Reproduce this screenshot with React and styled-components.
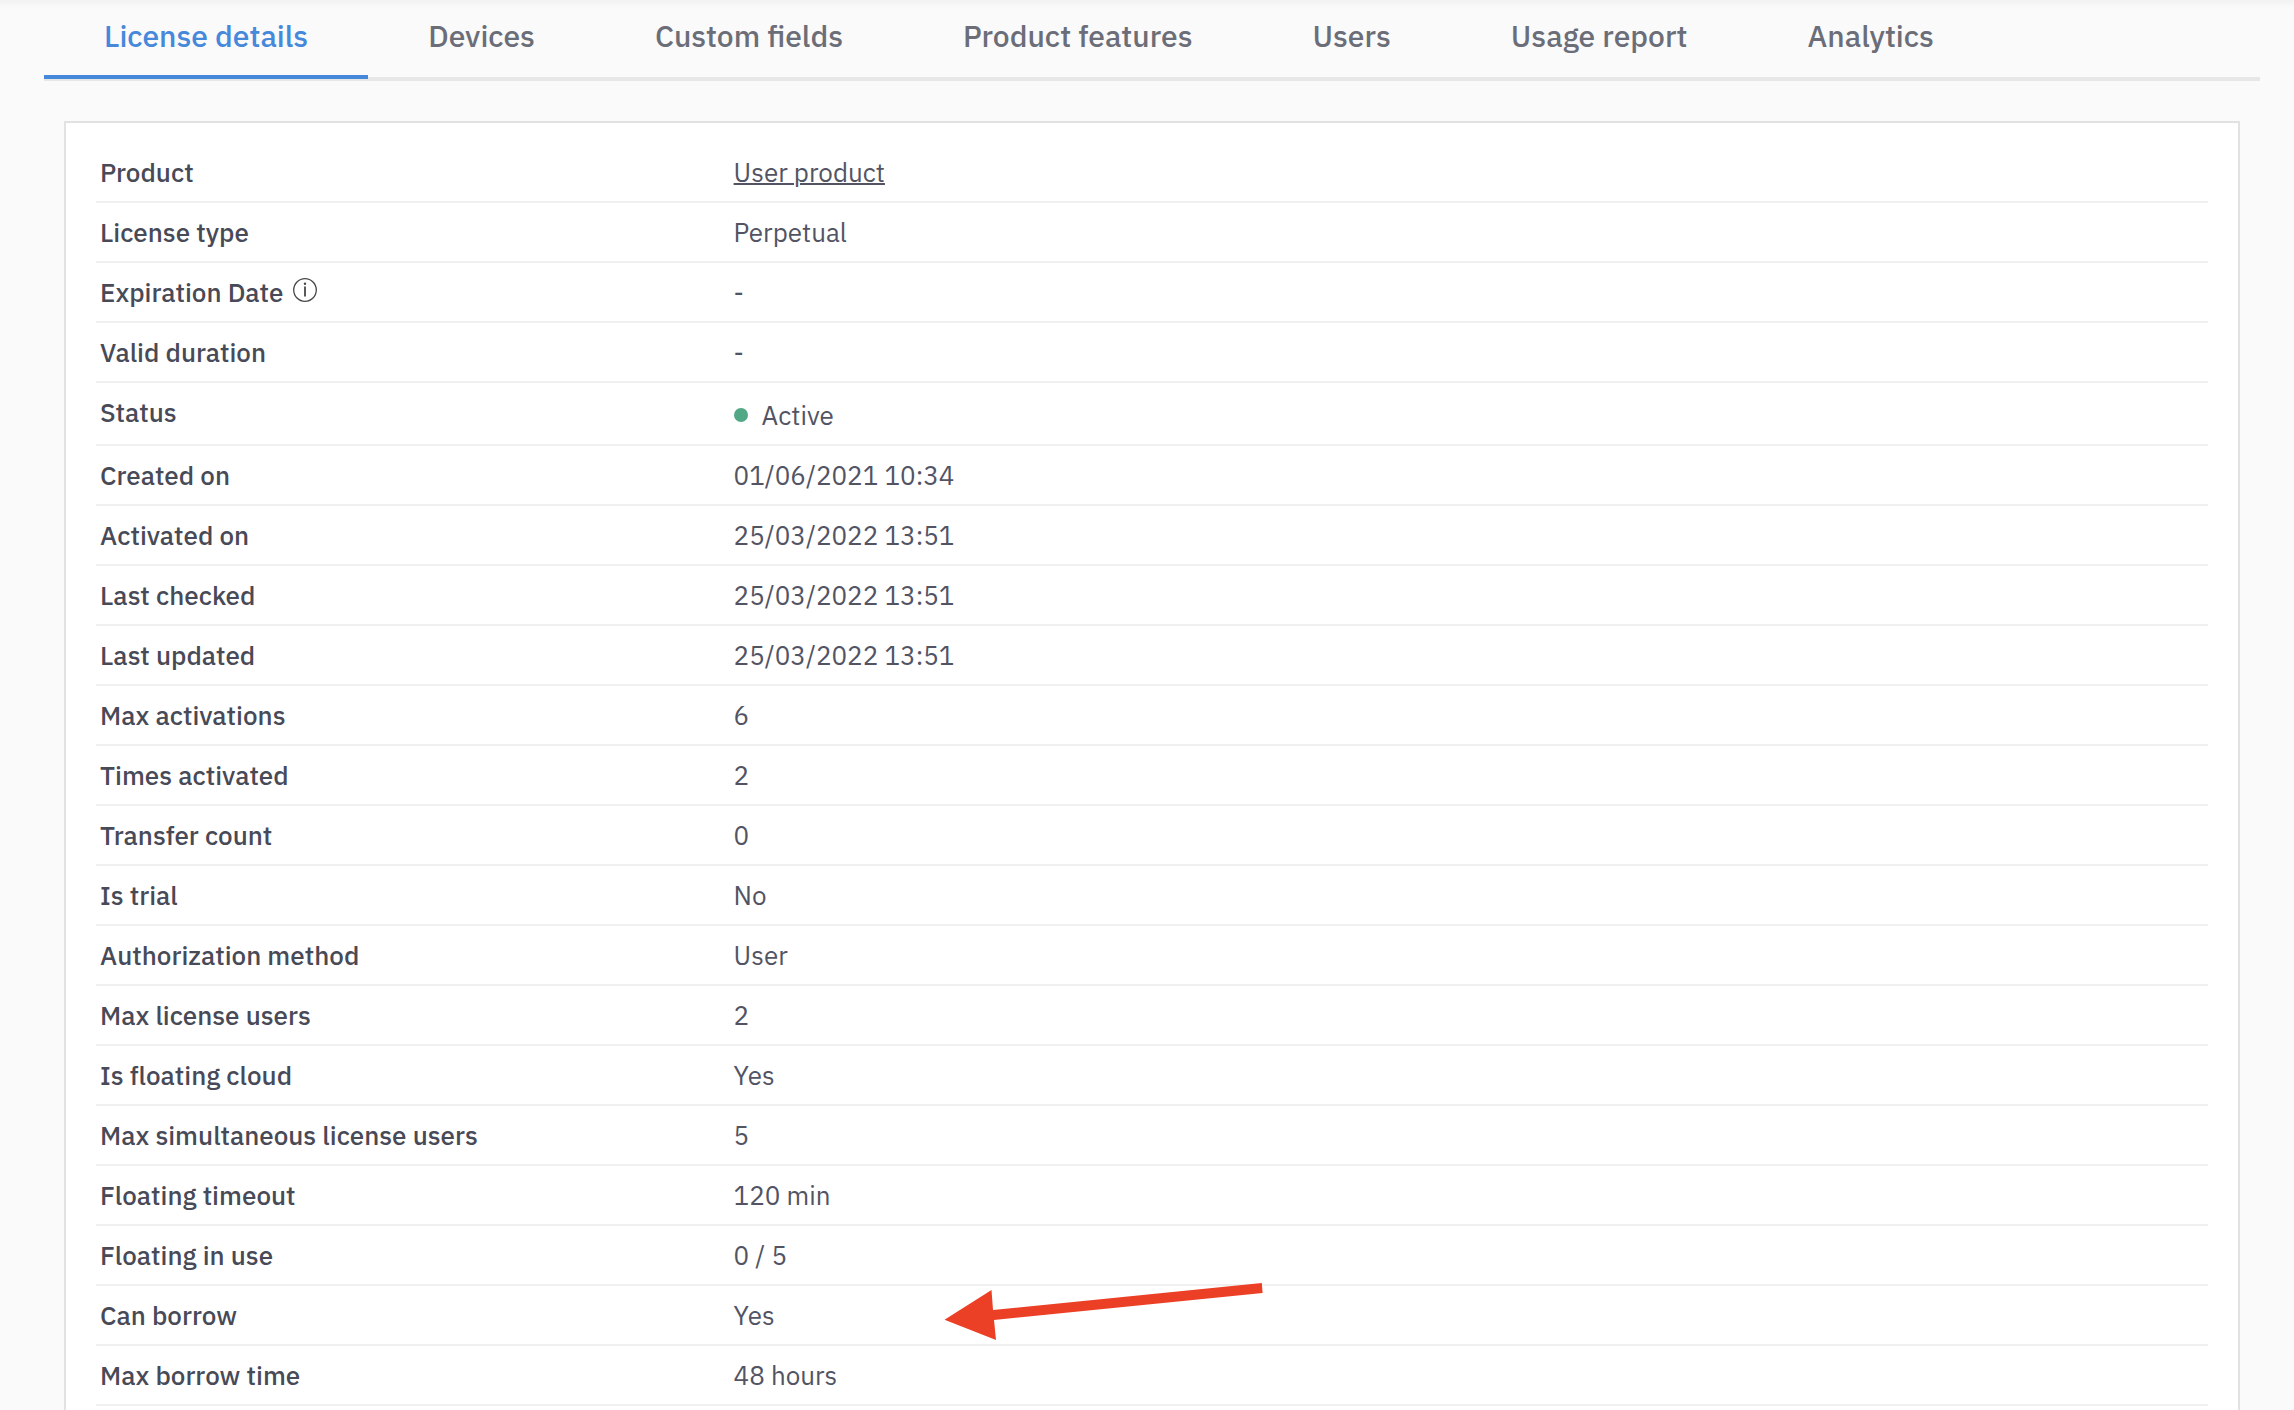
import React, { useState } from "react";
import styled, { createGlobalStyle } from "styled-components";

const GlobalStyle = createGlobalStyle`
  *, *::before, *::after {
    box-sizing: border-box;
  }

  body {
    margin: 0;
    background: #fafafa;
    font-family: "IBM Plex Sans", Roboto, "Liberation Sans", sans-serif;
    color: #525464;
  }
`;

const Page = styled.main`
  display: flex;
  flex-direction: column;
  min-height: 100vh;
  padding: 0 34px 0 44px;
  background: linear-gradient(#f2f2f2, #fafafa 8px);
`;

const TabBar = styled.div`
  display: flex;
  border-bottom: 4px solid #e7e7e7;
`;

const Tab = styled.button`
  height: 79px;
  margin: 0 0 -2px;
  padding: 0 60px 3px;
  border: 0;
  border-bottom: 4px solid
    ${({ $active }) => ($active ? "#4688da" : "transparent")};
  background: none;
  color: ${({ $active }) => ($active ? "#4688da" : "#6b6e78")};
  font-family: inherit;
  font-size: 30px;
  font-weight: 500;
  line-height: 40px;
  white-space: nowrap;
  cursor: pointer;
`;

const Card = styled.section`
  flex: 1;
  margin: 40px 20px 0;
  padding: 20px 30px 0;
  border: 2px solid #e2e2e2;
  border-bottom: 0;
  background: #fff;
`;

const Table = styled.table`
  width: 100%;
  border-spacing: 0;
  table-layout: fixed;
  font-size: 26px;
  line-height: 36px;
`;

const Label = styled.th`
  width: 30%;
  height: 60px;
  padding: 11px 4px;
  border-bottom: 2px solid #f0f0f0;
  color: #484a57;
  font-weight: 500;
  text-align: left;
  vertical-align: top;
`;

const Value = styled.td`
  position: relative;
  padding: 11px 4px;
  border-bottom: 2px solid #f0f0f0;
  vertical-align: top;
`;

const ProductLink = styled.a`
  color: inherit;
  text-decoration: underline;
  text-decoration-thickness: 2px;
`;

const Status = styled.span`
  display: flex;
  align-items: center;
  gap: 14px;
  padding-top: 3px;

  &::before {
    content: "";
    width: 14px;
    height: 14px;
    border-radius: 50%;
    background: #50a886;
  }
`;

const InfoSvg = styled.svg`
  width: 24px;
  height: 24px;
  margin-left: 10px;
`;

const ArrowSvg = styled.svg`
  position: absolute;
  top: -3px;
  left: 214px;
  width: 320px;
  height: 58px;
`;

const InfoIcon = () => (
  <InfoSvg viewBox="0 0 24 24" role="img" aria-label="Info">
    <circle cx="12" cy="12" r="11.3" fill="none" stroke="#484848" strokeWidth="1.3" />
    <circle cx="12" cy="5.7" r="1.2" fill="#484848" />
    <path d="M12 8.5V18.5" stroke="#484848" strokeWidth="1.8" />
  </InfoSvg>
);

const Arrow = () => (
  <ArrowSvg viewBox="0 0 320 58" aria-hidden="true">
    <path
      d="M0.5 36.7L47.5 7L49 27L317.8 0L318.6 10L50 37L52 57Z"
      fill="#eb4026"
    />
  </ArrowSvg>
);

const tabs = [
  "License details",
  "Devices",
  "Custom fields",
  "Product features",
  "Users",
  "Usage report",
  "Analytics",
];

const rows = [
  { label: "Product", value: <ProductLink href="#product">User product</ProductLink> },
  { label: "License type", value: "Perpetual" },
  { label: "Expiration Date", value: "-", info: true },
  { label: "Valid duration", value: "-" },
  { label: "Status", value: <Status>Active</Status> },
  { label: "Created on", value: "01/06/2021 10:34" },
  { label: "Activated on", value: "25/03/2022 13:51" },
  { label: "Last checked", value: "25/03/2022 13:51" },
  { label: "Last updated", value: "25/03/2022 13:51" },
  { label: "Max activations", value: "6" },
  { label: "Times activated", value: "2" },
  { label: "Transfer count", value: "0" },
  { label: "Is trial", value: "No" },
  { label: "Authorization method", value: "User" },
  { label: "Max license users", value: "2" },
  { label: "Is floating cloud", value: "Yes" },
  { label: "Max simultaneous license users", value: "5" },
  { label: "Floating timeout", value: "120 min" },
  { label: "Floating in use", value: "0 / 5" },
  { label: "Can borrow", value: "Yes", arrow: true },
  { label: "Max borrow time", value: "48 hours" },
];

function App() {
  const [active, setActive] = useState(tabs[0]);
  return (
    <>
      <GlobalStyle />
      <Page>
        <TabBar role="tablist">
          {tabs.map((tab) => (
            <Tab
              key={tab}
              type="button"
              role="tab"
              aria-selected={tab === active}
              $active={tab === active}
              onClick={() => setActive(tab)}
            >
              {tab}
            </Tab>
          ))}
        </TabBar>
        <Card>
          <Table>
            <tbody>
              {rows.map(({ label, value, info, arrow }) => (
                <tr key={label}>
                  <Label scope="row">
                    {label}
                    {info && <InfoIcon />}
                  </Label>
                  <Value>
                    {value}
                    {arrow && <Arrow />}
                  </Value>
                </tr>
              ))}
            </tbody>
          </Table>
        </Card>
      </Page>
    </>
  );
}

export default App;
